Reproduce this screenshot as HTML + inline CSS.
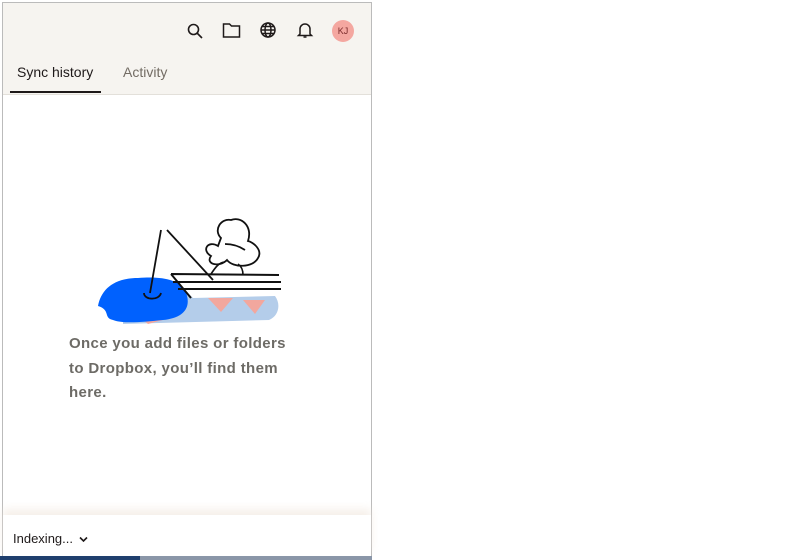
<!DOCTYPE html>
<html><head><meta charset="utf-8"><style>
*{margin:0;padding:0;box-sizing:border-box}
body{width:800px;height:560px;background:#fff;position:relative;overflow:hidden;font-family:"Liberation Sans",sans-serif}
.win{position:absolute;left:2px;top:2px;width:370px;height:555px;border:1px solid #bbb;background:#fff}
.hdr{position:absolute;left:0;top:0;width:368px;height:92px;background:#f6f4f0;border-bottom:1px solid #e3e0da}
.tab{position:absolute;top:61px;font-size:14px}
.uline{position:absolute;left:7px;top:88px;width:91px;height:2px;background:#1e1919}
.av{position:absolute;left:329px;top:17px;width:22px;height:22px;border-radius:50%;background:#f4a7a0;font-size:9px;color:#7a2a2a;text-align:center;line-height:22px}
.msg{position:absolute;left:66px;top:329px;font-family:"Liberation Sans",sans-serif;font-weight:bold;font-size:15px;line-height:24.5px;color:#6d6b66;letter-spacing:0.35px}
.foot{position:absolute;left:0;top:512px;width:368px;height:42px;background:#fff;box-shadow:0 -6px 8px rgba(240,230,220,0.6)}
.bar{position:absolute;left:0;top:556px;width:140px;height:4px;background:#1f3f6e}
.bar2{position:absolute;left:140px;top:556px;width:232px;height:4px;background:#8a96a8}
</style></head><body>
<div class="win">
<div class="hdr">
<svg style="position:absolute;left:183px;top:19px" width="18" height="18" viewBox="0 0 18 18" fill="none" stroke="#1e1919" stroke-width="1.6"><circle cx="7.5" cy="7.5" r="5"/><path d="M11 11l5 5"/></svg>
<svg style="position:absolute;left:219px;top:19px" width="19" height="17" viewBox="0 0 19 17" fill="none" stroke="#1e1919" stroke-width="1.5"><path d="M1.5 2h6l2 2h8v11h-16z"/></svg>
<svg style="position:absolute;left:256px;top:18px" width="18" height="18" viewBox="0 0 18 18" fill="none" stroke="#1e1919" stroke-width="1.5"><circle cx="9" cy="9" r="7"/><ellipse cx="9" cy="9" rx="3" ry="7"/><path d="M2 9h14M3 5.5h12M3 12.5h12"/></svg>
<svg style="position:absolute;left:293px;top:18px" width="18" height="18" viewBox="0 0 18 18" fill="none" stroke="#1e1919" stroke-width="1.5"><path d="M4 13V8a5 5 0 0110 0v5l1.5 1.5h-13z"/><path d="M7.5 16h3"/></svg>
<div class="av">KJ</div>
<div class="tab" style="left:14px;color:#1e1919">Sync history</div>
<div class="tab" style="left:120px;color:#736c64">Activity</div>
<div class="uline"></div>
</div>
<svg style="position:absolute;left:90px;top:205px" width="200" height="120" viewBox="0 0 200 120">
<path d="M30 72 C50 68 75 70 90 80 L100 90 L182 88 C188 96 186 108 176 112 L30 116 Z" fill="#b4cdea"/>
<path d="M40 104 L70 112 L55 116 Z M115 90 L128 104 L140 90 Z M150 92 L162 106 L172 92 Z" fill="#f2a79e"/>
<path d="M5 98 C8 82 20 70 45 70 C70 68 85 72 92 82 C100 100 90 110 70 112 C50 114 30 116 20 112 C10 110 18 102 5 98 Z" fill="#0061fe"/>
<path d="M68 22 L57 85 M74 22 L120 72" stroke="#111" stroke-width="1.8" fill="none"/>
<path d="M51 85 C51 92 66 93 68 85" stroke="#111" stroke-width="1.8" fill="none"/>
<path d="M78 66 L186 67 M80 74 L188 74 M85 81 L188 81 M78 66 L98 90" stroke="#111" stroke-width="2" fill="none"/>
<path d="M125 38 C115 32 108 42 118 48 C112 56 126 60 134 52 C140 60 160 60 165 50 C170 42 160 34 155 33 C160 18 148 8 138 12 C128 10 120 22 128 30 Z" fill="#fff" stroke="#111" stroke-width="1.8"/>
<path d="M132 36 C140 36 146 38 152 42" stroke="#111" stroke-width="1.8" fill="none"/>
<path d="M118 66 C122 60 126 54 132 54 M145 56 C148 58 150 62 150 67" stroke="#111" stroke-width="1.6" fill="none"/>
</svg>
<div class="msg">Once you add files or folders<br>to Dropbox, you’ll find them<br>here.</div>
<div class="foot"><div style="position:absolute;left:10px;top:16px;font-size:13px;color:#1e1919">Indexing... <svg width="9" height="7" viewBox="0 0 9 7" style="margin-left:2px"><path d="M1 1.5l3.5 3.5 3.5-3.5" stroke="#1e1919" stroke-width="1.6" fill="none"/></svg></div></div>
</div>
<div class="bar"></div><div class="bar2"></div>
</body></html>
